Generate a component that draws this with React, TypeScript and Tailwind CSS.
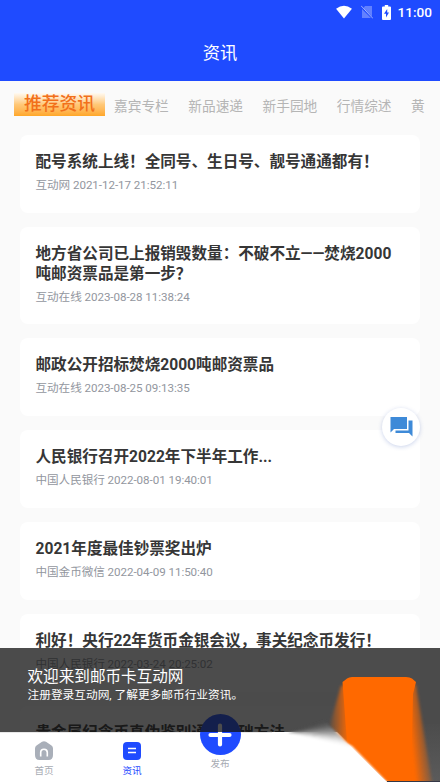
type Article = { title: string; meta: string };

const articles: Article[] = [
  { title: '配号系统上线！全同号、生日号、靓号通通都有！', meta: '互动网 2021-12-17 21:52:11' },
  { title: '地方省公司已上报销毁数量：不破不立——焚烧2000吨邮资票品是第一步？', meta: '互动在线 2023-08-28 11:38:24' },
  { title: '邮政公开招标焚烧2000吨邮资票品', meta: '互动在线 2023-08-25 09:13:35' },
  { title: '人民银行召开2022年下半年工作...', meta: '中国人民银行 2022-08-01 19:40:01' },
  { title: '2021年度最佳钞票奖出炉', meta: '中国金币微信 2022-04-09 11:50:40' },
  { title: '利好！央行22年货币金银会议，事关纪念币发行！', meta: '中国人民银行 2022-03-24 20:25:02' },
  { title: '贵金属纪念币真伪鉴别通用基础方法', meta: '' },
];

const tabs = ['嘉宾专栏', '新品速递', '新手园地', '行情综述', '黄'];

const hazeShades = ['#505050', '#5c5c5c', '#6f6f6f', '#858585', '#9d9d9d', '#b6b6b6', '#cdcdcd', '#e0e0e0', '#f0f0f0', '#fafafa'];

function StatusBar() {
  return (
    <div className="flex h-6 items-center justify-end pr-2 text-white">
      <svg className="mr-[8px] h-[14px] w-[18px]" viewBox="0 0 18 15">
        <path d="M0.5 4Q9-2.5 17.5 4L9 14.5Z" fill="#fff" />
      </svg>
      <svg className="mr-[9px] h-[14px] w-3" viewBox="0 0 12 14">
        <path d="M4 1h7v10.5L2.5 3ZM1 4l9 9H1Z" fill="#fff" opacity=".3" />
        <path d="M0 .7 12 13.5" stroke="#fff" opacity=".55" />
      </svg>
      <svg className="mr-[7px] h-[15px] w-[9px]" viewBox="0 0 9 15">
        <path d="M2.8 0h3.4v1.5H8q1 0 1 1V14q0 1-1 1H1q-1 0-1-1V2.5q0-1 1-1h1.8Z" fill="#fff" />
        <path d="M5.2 4 2 8.7h2V12.5L7 7.6H5.2Z" fill="#1f4bff" />
      </svg>
      <span className="text-[13.6px] font-medium leading-6">11:00</span>
    </div>
  );
}

function Card({ title, meta }: Article) {
  return (
    <article className="min-h-[78px] shrink-0 rounded-[8px] bg-white px-[15.5px] pt-[17.5px] pb-[19px]">
      <h2 className="w-[366px] text-[15.6px] font-bold leading-5 text-[#363636]">{title}</h2>
      <p className="mt-[4.500px] text-[11.6px] leading-4 tracking-[-0.05px] text-[#92969e]">{meta}</p>
    </article>
  );
}

function OrangeGlow() {
  return (
    <svg className="absolute right-0 bottom-0 z-20 h-[134px] w-[240px]" viewBox="200 648 240 134">
      <defs>
        <linearGradient id="shade" x1="0" y1="0" x2="0" y2="1">
          <stop offset="0" stopColor="#4c4c4c" />
          <stop offset="1" stopColor="#5b5b5b" />
        </linearGradient>
        <linearGradient id="left" x1="0" x2="1">
          <stop offset="0" stopColor="#ff6900" stopOpacity="0" />
          <stop offset="1" stopColor="#ff6900" />
        </linearGradient>
        <linearGradient id="right" gradientUnits="userSpaceOnUse" x1="411" y1="735" x2="431" y2="733">
          <stop offset="0" stopColor="#ff6900" />
          <stop offset=".4" stopColor="#ff6900" stopOpacity=".6" />
          <stop offset="1" stopColor="#ff6900" stopOpacity="0" />
        </linearGradient>
        <filter id="soft" x="-20%" y="-20%" width="140%" height="140%">
          <feGaussianBlur stdDeviation=".9" />
        </filter>
        <filter id="wide" x="-60%" y="-20%" width="220%" height="140%">
          <feGaussianBlur stdDeviation="1.500" />
        </filter>
      </defs>
      <path d="M329 724H440V782H387Z" fill="url(#shade)" />
      <path d="M349 684V750L328 731 341 686Z" fill="url(#left)" filter="url(#wide)" />
      <path d="M408 684 416 685 434 794H405Z" fill="url(#right)" filter="url(#wide)" />
      <path d="M342.500 682Q345 680 347 678.500T352 677H406Q410 677 412 678.500T416 682L413 694 411 782H387L347 743Z" fill="#ff6900" />
      <path d="M272 736H329L352 746 389 784H272Z" fill="#fff" filter="url(#soft)" />
      <path d="M272 732H330L387 782H272Z" fill="#fff" />
      <g filter="url(#soft)">
        {hazeShades.map((color, i) => {
          const y = 721 + i * 2.6;
          return <path key={color} d={`M288 733L${y - 396} ${y}L${y - 393} ${y + 3}Z`} fill={color} />;
        })}
      </g>
      <path d="M387 781.5H440" stroke="#343746" />
    </svg>
  );
}

function BottomNav() {
  return (
    <nav className="relative flex h-[50px] shrink-0 border-t border-[#e8e8e8] bg-white text-[9.6px] leading-3 text-[#a7abb3]">
      <div className="flex w-[88px] flex-col items-center pt-[8px]">
        <svg className="h-[19px] w-[18px]" viewBox="0 0 18 19">
          <path d="M7 .8q2-1.3 4 0l5.500 3.700Q18 5.500 18 7.500V14q0 5-4.500 5h-9Q0 19 0 14V7.500q0-2 1.500-3Z" fill="#a9afb9" />
          <path d="M5.700 15.500V11.500a3.300 3.300 0 0 1 6.600 0v4" fill="none" stroke="#fff" strokeWidth="1.6" />
        </svg>
        <span className="mt-[5px]">首页</span>
      </div>
      <div className="flex w-[88px] flex-col items-center pt-[9px] text-[#1f4bff]">
        <svg className="h-[18px] w-[18px]" viewBox="0 0 18 18">
          <rect width="18" height="18" rx="4" fill="#1f4bff" />
          <path d="M5 6.500h8M5 10.500h8" stroke="#fff" strokeWidth="1.6" />
        </svg>
        <span className="mt-[5px]">资讯</span>
      </div>
      <div className="flex w-[88px] flex-col items-center pt-[25px]">
        <span>发布</span>
      </div>
      <div className="absolute -top-[19px] left-[199.5px] flex h-[41px] w-[41px] items-center justify-center rounded-full bg-[#1f4bff]">
        <svg className="h-6 w-6" viewBox="0 0 24 24">
          <path d="M12 2.500V21.500M2.500 12H21.500" stroke="#fff" strokeWidth="4.2" strokeLinecap="round" />
        </svg>
      </div>
    </nav>
  );
}

export default function App() {
  return (
    <main className="relative flex h-[782px] w-[440px] flex-col overflow-hidden bg-[#fafafa] font-[Roboto,'Noto_Sans_CJK_SC',sans-serif]">
      <header className="h-[80.5px] shrink-0 bg-[#1f4bff]">
        <StatusBar />
        <h1 className="pt-[17px] text-center text-[17.3px] leading-6 text-white">资讯</h1>
      </header>

      <div className="flex h-[54px] shrink-0 items-start overflow-hidden pt-[12px] pl-[14px] whitespace-nowrap">
        <div className="h-[23px] w-[91px] shrink-0 bg-linear-to-b from-[#fffaf2] via-[#ffc877] to-[#ffa726] text-center text-[17.8px] font-medium leading-[22px] text-[#f2701a]">
          推荐资讯
        </div>
        <div className="ml-[9px] flex gap-[19.5px] text-[13.7px] leading-[27px] text-[#b5b5b5]">
          {tabs.map((t) => (
            <span key={t}>{t}</span>
          ))}
        </div>
      </div>

      <section className="flex min-h-0 flex-1 flex-col gap-[14px] overflow-hidden px-5">
        {articles.map((a) => (
          <Card key={a.title} {...a} />
        ))}
      </section>

      <BottomNav />

      <button className="absolute top-[408px] left-[382px] flex h-[38px] w-[38px] items-center justify-center rounded-full bg-white shadow-[0_1px_4px_rgba(80,110,190,0.3)]">
        <svg className="h-6 w-6" viewBox="0 0 24 24">
          <path d="M1.500 2H18V14H5L1.500 17.500Z" fill="#3e8ad8" />
          <path d="M19.500 5.500H23.500V21.500L20 18H6.500V15.500H19.500Z" fill="#3e8ad8" />
        </svg>
      </button>

      <div className="absolute inset-x-0 top-[648px] z-10 h-[84px] bg-[#101010]/75 pt-[19px] pl-[27.5px] text-white">
        <p className="text-[15.6px] leading-5">欢迎来到邮币卡互动网</p>
        <p className="text-[11.7px] leading-[17px]">注册登录互动网, 了解更多邮币行业资讯。</p>
      </div>
      <OrangeGlow />
    </main>
  );
}
